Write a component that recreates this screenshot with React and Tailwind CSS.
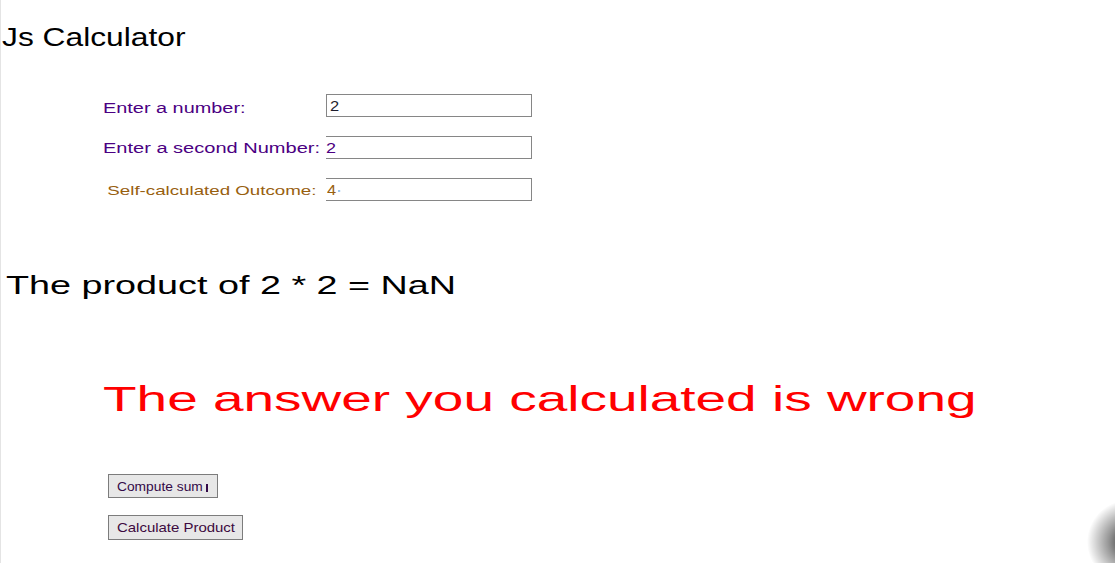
import React from "react";

const font = "font-['Liberation_Sans',Arial,sans-serif]";

function Row({ label, labelClass, value, valueClass, boxClass }) {
  return (
    <div className="flex items-center h-[23px]">
      <div className="w-[223px] h-[23px] flex items-center">
        <span className={`inline-block origin-left whitespace-nowrap leading-none ${labelClass}`}>{label}</span>
      </div>
      <div className={`w-[206px] h-[23px] flex items-center border-y border-r border-[#868686] bg-white ${boxClass}`}>
        <span className={`inline-block origin-left leading-none ${valueClass}`}>{value}</span>
      </div>
    </div>
  );
}

export default function App() {
  return (
    <div className={`relative w-full h-[563px] overflow-hidden bg-white border-l border-[#e4e4e4] pt-[25px] ${font}`}>
      {/* title */}
      <h1 className="pl-[1px] text-[25px] leading-none text-black font-normal h-[25px]">
        <span className="inline-block origin-left scale-x-[1.27] whitespace-nowrap">Js Calculator</span>
      </h1>

      {/* inputs */}
      <div className="pl-[102px] mt-[44px] flex flex-col gap-[19px]">
        <Row
          label="Enter a number:"
          labelClass="text-[14px] text-[#4b0082] scale-x-[1.42] mt-[4px]"
          value="2"
          valueClass="text-[15px] text-[#1e1e2e] scale-x-[1.1]"
          boxClass="border-l pl-[3px]"
        />
        <Row
          label="Enter a second Number:"
          labelClass="text-[14px] text-[#4b0082] scale-x-[1.43]"
          value="2"
          valueClass="text-[15px] text-[#4b0082] scale-x-[1.2]"
          boxClass="pl-0"
        />
        <Row
          label={<span className="pl-[3px]">Self-calculated Outcome:</span>}
          labelClass="text-[13px] text-[#98600f] scale-x-[1.44] mt-[2px]"
          value={<>4<span className="inline-block w-[2px] h-[2px] bg-[#9cc7f0] ml-[2px] align-middle" /></>}
          valueClass="text-[15px] text-[#98600f] scale-x-[1.1]"
          boxClass="pl-[1px]"
        />
      </div>

      {/* product */}
      <p className="mt-[72px] pl-[5px] text-[25px] leading-none h-[25px] text-black">
        <span className="inline-block origin-left scale-x-[1.51] whitespace-nowrap">The product of 2 * 2 = NaN</span>
      </p>

      {/* verdict */}
      <p className="mt-[83px] pl-[102px] text-[35px] leading-none h-[35px] text-[#ff0000]">
        <span className="inline-block origin-left scale-x-[1.57] whitespace-nowrap">The answer you calculated is wrong</span>
      </p>

      {/* buttons */}
      <div className="pl-[107px] mt-[58px] flex flex-col items-start gap-[17px]">
        <button className="w-[110px] h-[24px] flex items-center pl-[8px] bg-[#e7e7e7] border border-[#7c7c7c] text-[13px] leading-none text-[#330a48]">
          <span className="inline-block origin-left scale-x-[1.06] whitespace-nowrap">Compute sum</span>
          <span className="inline-block w-[2px] h-[8px] bg-[#330a48] ml-[8px] mt-[3px]" />
        </button>
        <button className="w-[135px] h-[25px] flex items-center pl-[8px] bg-[#e7e7e7] border border-[#7c7c7c] text-[13px] leading-none text-[#3d0a40]">
          <span className="inline-block origin-left scale-x-[1.15] whitespace-nowrap">Calculate Product</span>
        </button>
      </div>

      {/* corner shadow */}
      <div className="absolute left-[1086px] top-[500px] w-[84px] h-[84px] rounded-full bg-[radial-gradient(circle_closest-side,rgba(0,0,0,0.85)_0%,rgba(0,0,0,0.4)_50%,rgba(0,0,0,0)_100%)]" />
    </div>
  );
}
